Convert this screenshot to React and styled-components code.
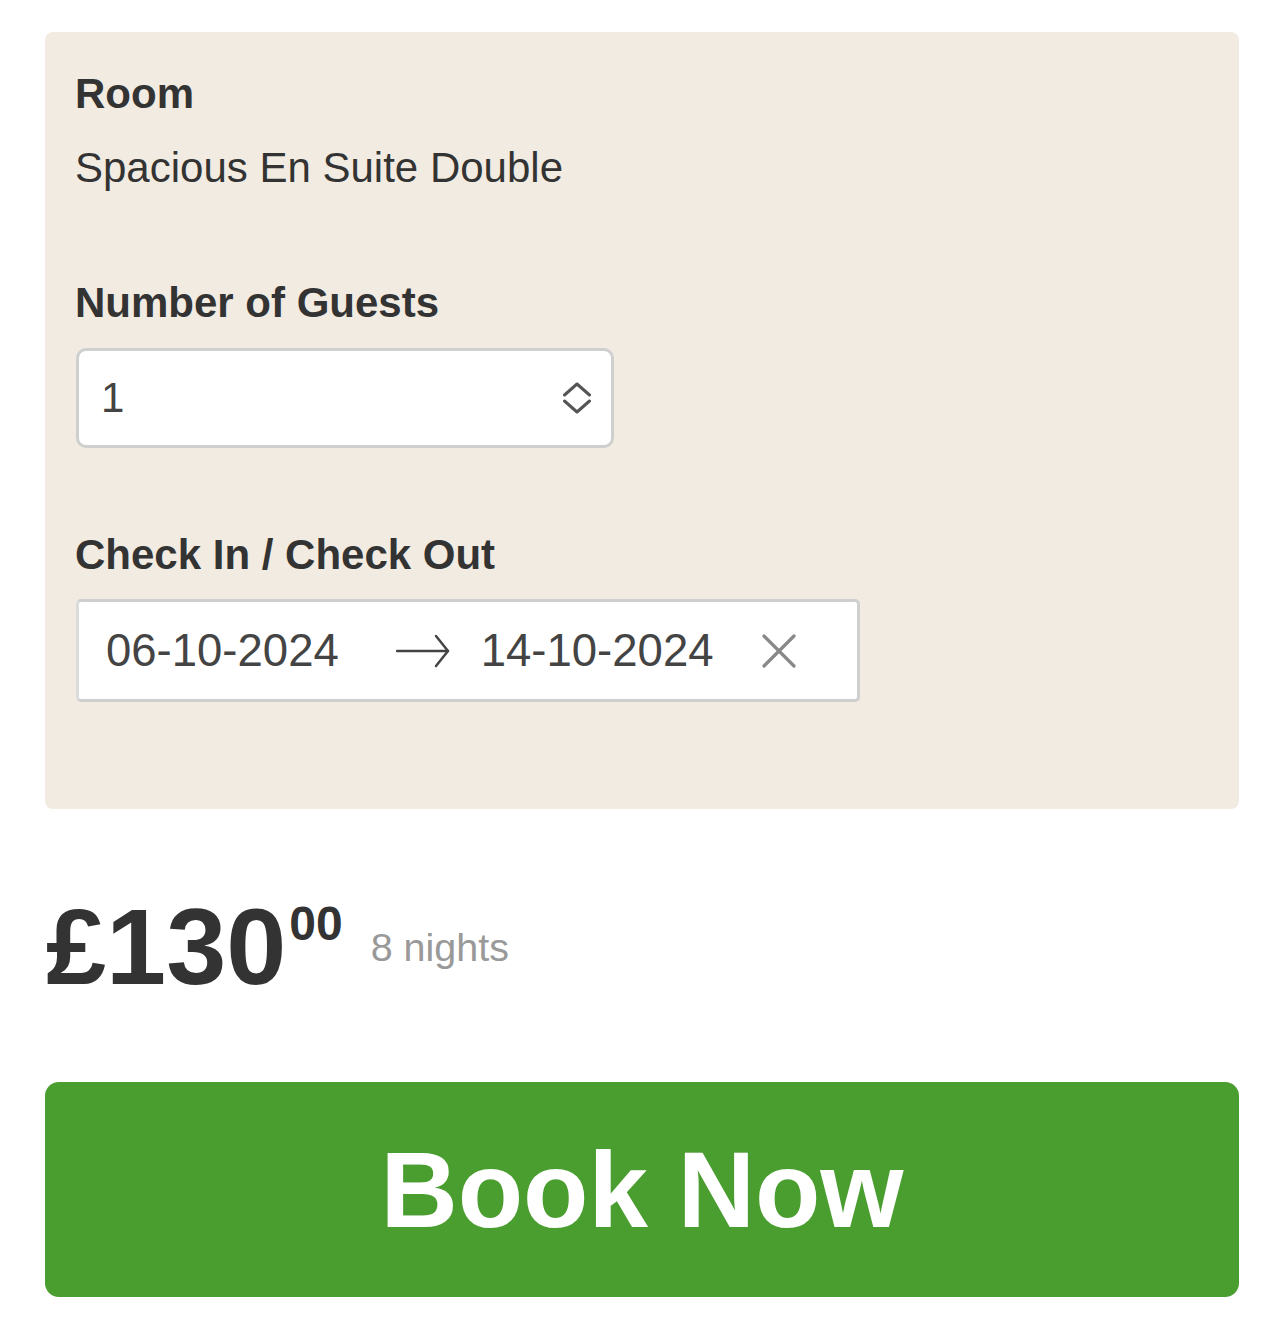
import React from "react";
import styled, { createGlobalStyle } from "styled-components";

const GlobalStyle = createGlobalStyle`
  body {
    margin: 0;
    background: #ffffff;
    font-family: "Liberation Sans", Helvetica, Arial, sans-serif;
    color: #333333;
  }
`;

const Page = styled.div`
  padding: 32px 45px 40px;
`;

const Panel = styled.div`
  background: #f2ebe1;
  border-radius: 8px;
  padding: 37px 31px 107px 30px;
  display: flex;
  flex-direction: column;
`;

const Section = styled.div`
  display: flex;
  flex-direction: column;
  align-items: flex-start;
  gap: ${(p) => p.$gap}px;
  margin-bottom: ${(p) => p.$after || 0}px;
`;

const Label = styled.div`
  font-size: 42px;
  line-height: 50px;
  font-weight: 700;
  color: #333333;
`;

const Value = styled.div`
  font-size: 42px;
  line-height: 50px;
  color: #333333;
`;

const Select = styled.div`
  box-sizing: border-box;
  width: 538px;
  height: 100px;
  margin-left: 1px;
  border: 3px solid #cfcfcf;
  border-radius: 10px;
  background: #ffffff;
  display: flex;
  align-items: center;
  justify-content: space-between;
  padding: 0 20px 0 22px;
  font-size: 42px;
  color: #444444;
`;

const DateBox = styled.div`
  box-sizing: border-box;
  width: 784px;
  height: 103px;
  margin-left: 1px;
  border: 3px solid #cfcfcf;
  border-left-color: #dcdcdc;
  border-radius: 5px;
  background: #ffffff;
  display: flex;
  align-items: center;
  padding-left: 27px;
  font-size: 45.5px;
  color: #444444;
`;

const DateText = styled.span`
  margin-left: ${(p) => p.$offset || 0}px;
`;

const IconSlot = styled.span`
  display: flex;
  margin-left: ${(p) => p.$offset}px;
`;

const PriceRow = styled.div`
  display: flex;
  align-items: center;
  margin-top: 84px;
  padding-left: 1px;
`;

const Price = styled.div`
  display: flex;
  align-items: flex-start;
  color: #333333;
  font-weight: 700;
`;

const PriceMain = styled.span`
  font-size: 108px;
  line-height: 108px;
`;

const PriceCents = styled.span`
  font-size: 48px;
  line-height: 48px;
  margin-top: 7px;
  margin-left: 3px;
`;

const Nights = styled.span`
  font-size: 39.5px;
  color: #999999;
  margin-left: 28px;
`;

const BookButton = styled.button`
  display: flex;
  align-items: center;
  justify-content: center;
  width: 100%;
  height: 215px;
  margin-top: 81px;
  border: none;
  border-radius: 14px;
  background: #4a9d2f;
  color: #ffffff;
  font-family: inherit;
  font-size: 107px;
  font-weight: 700;
  cursor: pointer;
`;

const Chevrons = () => (
  <svg width="28" height="32" viewBox="0 0 28 32" fill="none" stroke="#555" strokeWidth="3" strokeLinecap="round" strokeLinejoin="round">
    <path d="M1.5 13 L14 2 L26.5 13" />
    <path d="M1.5 19 L14 30 L26.5 19" />
  </svg>
);

const Arrow = () => (
  <svg width="54" height="34" viewBox="0 0 54 34" fill="none" stroke="#444" strokeWidth="2.5" strokeLinecap="round" strokeLinejoin="round">
    <path d="M1 17 H52" />
    <path d="M40 2 L52 17 L40 32" />
  </svg>
);

const Clear = () => (
  <svg width="34" height="34" viewBox="0 0 34 34" fill="none" stroke="#888" strokeWidth="3.2" strokeLinecap="round">
    <path d="M2 2 L32 32" />
    <path d="M32 2 L2 32" />
  </svg>
);

const App = () => {
  return (
    <Page>
      <GlobalStyle />
      <Panel>
        <Section $gap={24} $after={85}>
          <Label>Room</Label>
          <Value>Spacious En Suite Double</Value>
        </Section>
        <Section $gap={20} $after={82}>
          <Label>Number of Guests</Label>
          <Select>
            <span>1</span>
            <Chevrons />
          </Select>
        </Section>
        <Section $gap={19}>
          <Label>Check In / Check Out</Label>
          <DateBox>
            <DateText>06-10-2024</DateText>
            <IconSlot $offset={57}>
              <Arrow />
            </IconSlot>
            <DateText $offset={31}>14-10-2024</DateText>
            <IconSlot $offset={48}>
              <Clear />
            </IconSlot>
          </DateBox>
        </Section>
      </Panel>
      <PriceRow>
        <Price>
          <PriceMain>£130</PriceMain>
          <PriceCents>00</PriceCents>
        </Price>
        <Nights>8 nights</Nights>
      </PriceRow>
      <BookButton>Book Now</BookButton>
    </Page>
  );
};

export default App;
